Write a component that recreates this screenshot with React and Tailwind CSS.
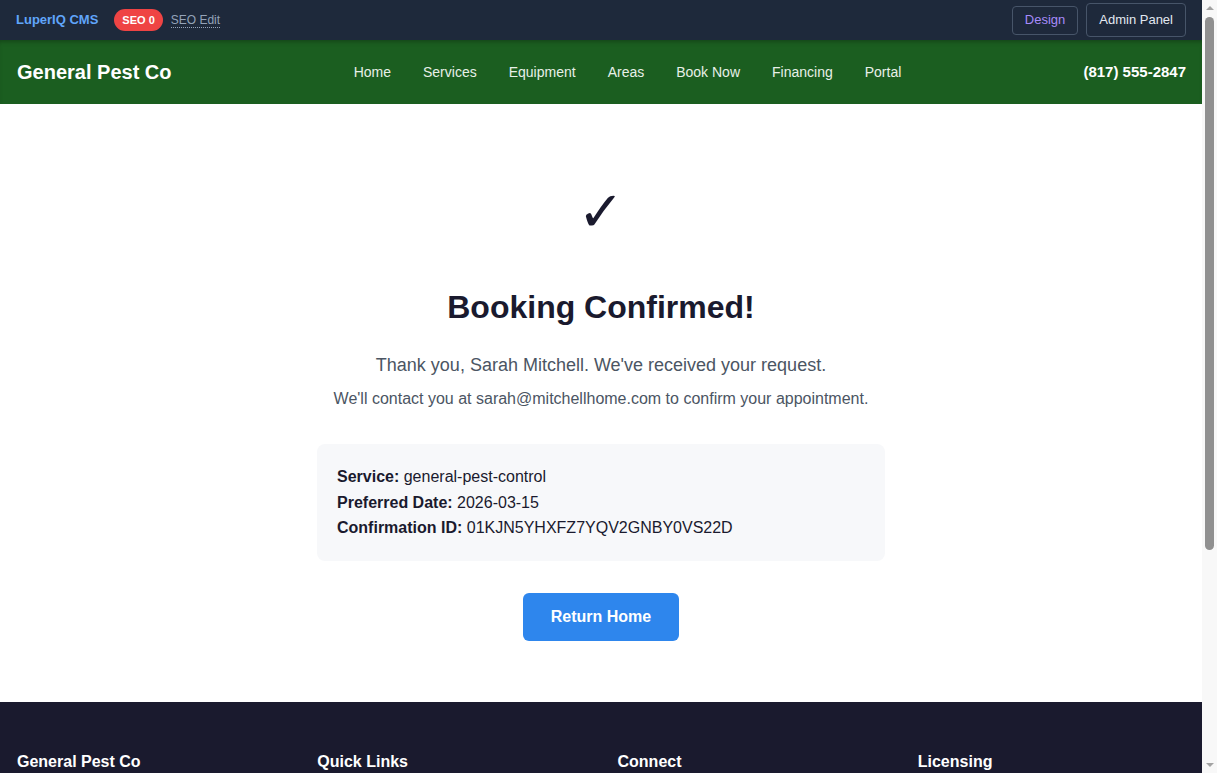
import React from "react";

const navLinks = ["Home", "Services", "Equipment", "Areas", "Book Now", "Financing", "Portal"];

// the reference shows a classic page scrollbar; headless run hides it, so it is drawn here
function FakeScrollbar() {
    return (
        <div className="fixed top-0 right-0 h-screen w-[15px] bg-[#f8f8f8] flex flex-col items-center">
            <div className="mt-[6px] w-0 h-0 border-l-[4px] border-r-[4px] border-b-[4px] border-l-transparent border-r-transparent border-b-[#a3a3a3]" />
            <div className="mt-[7px] w-[9px] h-[533px] rounded-full bg-[#909090]" />
            <div className="flex-1" />
            <div className="mb-[6px] w-0 h-0 border-l-[4px] border-r-[4px] border-t-[4px] border-l-transparent border-r-transparent border-t-[#a3a3a3]" />
        </div>
    );
}

export default function App() {
    return (
        <div className="min-h-screen bg-white font-['Liberation_Sans',Arial,sans-serif]">
            <div className="mr-[15px]">
                {/* CMS admin bar */}
                <div className="h-10 bg-[#1e293b] flex items-center justify-between px-4">
                    <div className="flex items-center">
                        <span className="text-[13px] font-bold text-[#60a5fa]">LuperIQ CMS</span>
                        <span className="ml-4 h-[22px] px-2 rounded-full bg-[#ef4444] text-white text-[11px] font-bold flex items-center">
                            SEO 0
                        </span>
                        <span className="ml-2 text-[12px] text-[#94a3b8] border-b border-dotted border-[#94a3b8] leading-[14px]">
                            SEO Edit
                        </span>
                    </div>
                    <div className="flex items-center gap-2">
                        <button className="h-[29px] px-3 rounded border border-[#475569] text-[13px] text-[#a78bfa]">
                            Design
                        </button>
                        <button className="h-[34px] px-3 rounded border border-[#475569] text-[13px] text-[#e2e8f0]">
                            Admin Panel
                        </button>
                    </div>
                </div>

                {/* Site header */}
                <header className="h-16 bg-[#1b5e20] shadow-[inset_0_4px_4px_-2px_rgba(0,0,0,0.25)] flex items-center justify-between pl-[17px] pr-4">
                    <div className="text-xl font-bold text-white">General Pest Co</div>
                    <nav className="flex items-center gap-8">
                        {navLinks.map((link) => (
                            <a key={link} className="text-[14px] text-[#e8f0e8]">
                                {link}
                            </a>
                        ))}
                    </nav>
                    <div className="text-[15px] font-bold text-white">(817) 555-2847</div>
                </header>

                {/* Confirmation */}
                <main className="pt-[66px] pb-[61px]">
                    <div className="max-w-[600px] mx-auto px-4 text-center">
                        <div className="text-[56px] leading-[84px] text-[#1a1a2e] font-['DejaVu_Sans',sans-serif]">✓</div>
                        <h1 className="mt-[29px] text-[32px] font-bold text-[#1a1a2e] leading-[48px]">Booking Confirmed!</h1>
                        <p className="mt-[21px] text-lg text-[#4b5563] leading-[27px]">
                            Thank you, Sarah Mitchell. We've received your request.
                        </p>
                        <p className="mt-[8px] text-base text-[#4b5563] leading-6">
                            We'll contact you at sarah@mitchellhome.com to confirm your appointment.
                        </p>
                        <div className="mt-[33px] bg-[#f7f8fa] rounded-lg p-5 text-left text-base text-[#1a1a2e] leading-[1.6]">
                            <div><strong>Service:</strong> general-pest-control</div>
                            <div><strong>Preferred Date:</strong> 2026-03-15</div>
                            <div><strong>Confirmation ID:</strong> 01KJN5YHXFZ7YQV2GNBY0VS22D</div>
                        </div>
                        <button className="mt-8 h-12 px-7 rounded-md bg-[#2e86ed] text-white text-base font-bold">
                            Return Home
                        </button>
                    </div>
                </main>

                {/* Footer */}
                <footer className="bg-[#1a1a2e] pt-12 pb-12 pl-[17px] pr-4">
                    <div className="grid grid-cols-4 gap-8">
                        <div>
                            <h3 className="text-base font-bold text-white mb-3">General Pest Co</h3>
                            <p className="text-sm text-[#9ca3af]">Professional pest control you can trust.</p>
                        </div>
                        <div>
                            <h3 className="text-base font-bold text-white mb-3">Quick Links</h3>
                            <ul className="text-sm text-[#9ca3af] space-y-1">
                                <li>Services</li>
                                <li>Book Now</li>
                                <li>Portal</li>
                            </ul>
                        </div>
                        <div>
                            <h3 className="text-base font-bold text-white mb-3">Connect</h3>
                            <p className="text-sm text-[#9ca3af]">(817) 555-2847</p>
                        </div>
                        <div>
                            <h3 className="text-base font-bold text-white mb-3">Licensing</h3>
                            <p className="text-sm text-[#9ca3af]">Licensed &amp; insured</p>
                        </div>
                    </div>
                </footer>
            </div>
            <FakeScrollbar />
        </div>
    );
}
